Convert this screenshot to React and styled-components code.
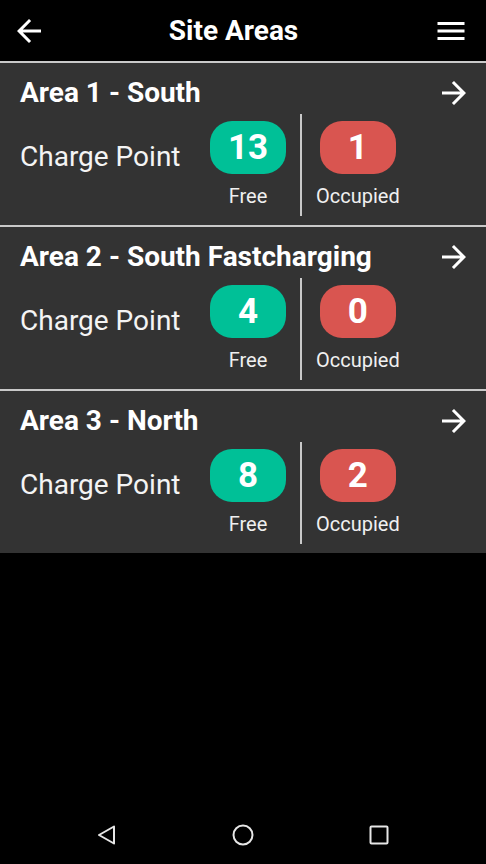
import React from "react";
import styled, { createGlobalStyle } from "styled-components";

const GlobalStyle = createGlobalStyle`
    * {
        box-sizing: border-box;
    }
    html, body {
        margin: 0;
        padding: 0;
        background: #000;
    }
    body {
        font-family: Roboto, "Noto Sans", "Liberation Sans", sans-serif;
        color: #fff;
    }
`;

const areas = [
    { name: "Area 1 - South", free: 13, occupied: 1 },
    { name: "Area 2 - South Fastcharging", free: 4, occupied: 0 },
    { name: "Area 3 - North", free: 8, occupied: 2 },
];

const BackIcon = () => (
    <svg width="36" height="36" viewBox="0 0 24 24" fill="#fff">
        <path d="M20 11H7.83l5.59-5.59L12 4l-8 8 8 8 1.41-1.41L7.83 13H20v-2z" />
    </svg>
);

const MenuIcon = () => (
    <svg width="36" height="36" viewBox="0 0 24 24" fill="#fff">
        <path d="M3 18h18v-2H3v2zm0-5h18v-2H3v2zm0-7v2h18V6H3z" />
    </svg>
);

const ForwardIcon = () => (
    <svg width="36" height="36" viewBox="0 0 24 24" fill="#fff">
        <path d="M4 11h12.17l-5.59-5.59L12 4l8 8-8 8-1.41-1.41L16.17 13H4v-2z" />
    </svg>
);

const App = () => {
    return (
        <>
            <GlobalStyle />
            <Screen>
                <Header>
                    <IconButton>
                        <BackIcon />
                    </IconButton>
                    <Title>Site Areas</Title>
                    <IconButton>
                        <MenuIcon />
                    </IconButton>
                </Header>
                <List>
                    {areas.map((area) => (
                        <Card key={area.name}>
                            <CardTop>
                                <AreaName>{area.name}</AreaName>
                                <ForwardIcon />
                            </CardTop>
                            <CardBody>
                                <PointLabel>Charge Point</PointLabel>
                                <Stat>
                                    <Pill color="#00c097">{area.free}</Pill>
                                    <StatLabel>Free</StatLabel>
                                </Stat>
                                <Divider />
                                <Stat>
                                    <Pill color="#d95550">{area.occupied}</Pill>
                                    <StatLabel>Occupied</StatLabel>
                                </Stat>
                            </CardBody>
                        </Card>
                    ))}
                </List>
                <NavBar>
                    <svg width="22" height="22" viewBox="0 0 22 22">
                        <path
                            d="M18 2.5 L3 11 L18 19.5 Z"
                            fill="none"
                            stroke="#e6e6e6"
                            strokeWidth="2"
                            strokeLinejoin="round"
                        />
                    </svg>
                    <svg width="24" height="24" viewBox="0 0 24 24">
                        <circle
                            cx="12"
                            cy="12"
                            r="9.5"
                            fill="none"
                            stroke="#e6e6e6"
                            strokeWidth="2"
                        />
                    </svg>
                    <svg width="22" height="22" viewBox="0 0 22 22">
                        <rect
                            x="2.5"
                            y="2.5"
                            width="17"
                            height="17"
                            rx="1"
                            fill="none"
                            stroke="#e6e6e6"
                            strokeWidth="2"
                        />
                    </svg>
                </NavBar>
            </Screen>
        </>
    );
};

export default App;

const Screen = styled.div`
    height: 864px;
    display: flex;
    flex-direction: column;
    background: #000;
    overflow: hidden;
`;

const Header = styled.header`
    height: 61px;
    flex-shrink: 0;
    display: flex;
    align-items: center;
    padding: 0 17px 0 11px;
`;

const IconButton = styled.span`
    display: flex;
    align-items: center;
    justify-content: center;
    width: 36px;
    height: 36px;
`;

const Title = styled.h1`
    flex: 1;
    margin: 0 13px 0 0;
    text-align: center;
    font-size: 28px;
    font-weight: 700;
`;

const List = styled.ul`
    list-style: none;
    margin: 0;
    padding: 0;
    flex: 1;
`;

const Card = styled.li`
    height: 164px;
    border-top: 2px solid #c9c9c9;
    background: #333333;
    padding: 13px 14px 0 20px;
`;

const CardTop = styled.div`
    display: flex;
    align-items: center;
    justify-content: space-between;
    height: 34px;
`;

const AreaName = styled.h2`
    margin: 0;
    font-size: 28px;
    font-weight: 700;
    line-height: 34px;
`;

const CardBody = styled.div`
    display: flex;
    margin-top: 4px;
    height: 102px;
`;

const PointLabel = styled.p`
    margin: 0;
    width: 190px;
    padding-top: 18px;
    font-size: 28px;
    line-height: 50px;
    color: #f4f4f4;
`;

const Stat = styled.div`
    display: flex;
    flex-direction: column;
    align-items: center;
    padding-top: 7px;
    min-width: 76px;
`;

const Pill = styled.span`
    display: flex;
    align-items: center;
    justify-content: center;
    width: 76px;
    height: 53px;
    border-radius: 22px;
    background: ${(props) => props.color};
    font-size: 35px;
    font-weight: 700;
`;

const StatLabel = styled.span`
    margin-top: 9px;
    font-size: 20px;
    line-height: 26px;
    color: #f0f0f0;
`;

const Divider = styled.span`
    width: 2px;
    height: 102px;
    margin: 0 14px;
    background: #c9c9c9;
`;

const NavBar = styled.nav`
    height: 62px;
    flex-shrink: 0;
    display: flex;
    align-items: center;
    justify-content: space-between;
    padding: 4px 96px 0 96px;
`;
